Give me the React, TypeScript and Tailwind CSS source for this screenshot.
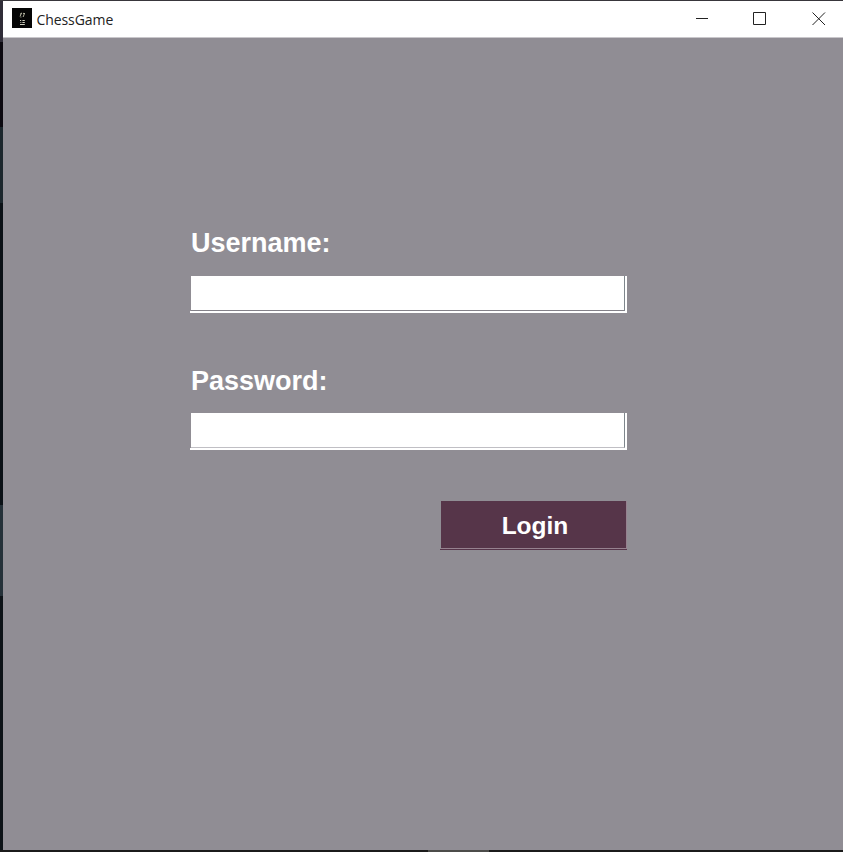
import React from "react";

function Field({ label, type, gap, lineColor }: { label: string; type: string; gap: string; lineColor: string }) {
  return (
    <label className="block">
      <span className="block h-8 whitespace-nowrap pl-px text-[27px] font-bold leading-8 text-white">{label}</span>
      <div className={`h-[37px] w-[437px] border-b-2 border-r-2 border-white pl-px ${gap}`}>
        <input
          type={type}
          className={`block h-full w-full border-b border-r border-r-[#7f878d] bg-white px-2 text-xl text-black outline-none ${lineColor}`}
        />
      </div>
    </label>
  );
}

function AppIcon() {
  return (
    <svg width="20" height="20" viewBox="0 0 20 20" className="mb-[2px] ml-[9px] shrink-0">
      <rect width="20" height="20" fill="#050505" />
      <g stroke="#c6c6b0" strokeWidth="0.9" fill="none">
        <path d="M8 6.4l1.6-1.4M9.6 5L8 8.4M12.7 5l-1.6 4M11 5.4h1M8.4 9h1" />
        <path d="M8 12.5h1.2M10.4 12.5h2.4M8.4 14.5h.9M10.4 14.5h2.4M8 16.5h4.8" stroke="#e6e6d4" />
      </g>
    </svg>
  );
}

function TitleBar() {
  return (
    <header className="flex h-[37px] shrink-0 items-center border-b border-[#c9c7cb] bg-white text-black">
      <AppIcon />
      <h1 className="ml-[4.5px] flex-1 pt-px font-['Open_Sans','Noto_Sans',sans-serif] text-[14px] leading-5 tracking-[-0.08px] text-[#222]">
        ChessGame
      </h1>
      <svg width="163" height="36" viewBox="680 1 163 36" fill="none" stroke="#222" strokeWidth="1" aria-label="Window controls">
        <path d="M696 18.5h12" />
        <path d="M753.5 12.5h12v12h-12z" />
        <path d="M812.5 12.5l12.5 12.5M825 12.5L812.5 25" />
      </svg>
    </header>
  );
}

export default function App() {
  return (
    <div className="flex h-[852px] w-[843px] flex-col overflow-hidden bg-[#10161c] font-['Liberation_Sans',Arial,sans-serif]">
      <div className="h-px shrink-0 bg-[#38363b]" />
      <div className="flex min-h-0 flex-1">
        <div className="flex w-[3px] shrink-0 flex-col">
          <div className="h-[41px] bg-[#302d38]" />
          <div className="h-[85px] bg-[#0c0910]" />
          <div className="h-[76px] bg-[#1c272d]" />
          <div className="h-[302px] bg-[#0b1116]" />
          <div className="h-[91px] bg-[#253139]" />
          <div className="flex-1 bg-[#0d1318]" />
        </div>
        <section className="flex flex-1 flex-col">
          <TitleBar />
          <main className="flex-1 bg-[#908d94]">
            <form className="ml-[187px] w-[437px] pt-[189px]" onSubmit={(e) => e.preventDefault()}>
              <Field label="Username:" type="text" gap="mt-[17px]" lineColor="border-b-[#838188]" />
              <div className="h-[52px]" />
              <Field label="Password:" type="password" gap="mt-4" lineColor="border-b-[#c0bfc4]" />
              <div className="ml-auto mt-[51px] h-[49px] w-[187px] border-b border-[#553449]">
                <button className="ml-px block h-[48px] w-[186px] border-b border-r border-[#96818f] bg-[#563549] pl-[3px] pt-[2px] text-[24.5px] font-bold leading-[45px] text-white">
                  Login
                </button>
              </div>
            </form>
          </main>
        </section>
      </div>
      <div className="flex h-[2px] shrink-0 bg-[#1b1b1b]">
        <div className="ml-[428px] w-[61px] bg-[#4c4c4a]" />
      </div>
    </div>
  );
}
